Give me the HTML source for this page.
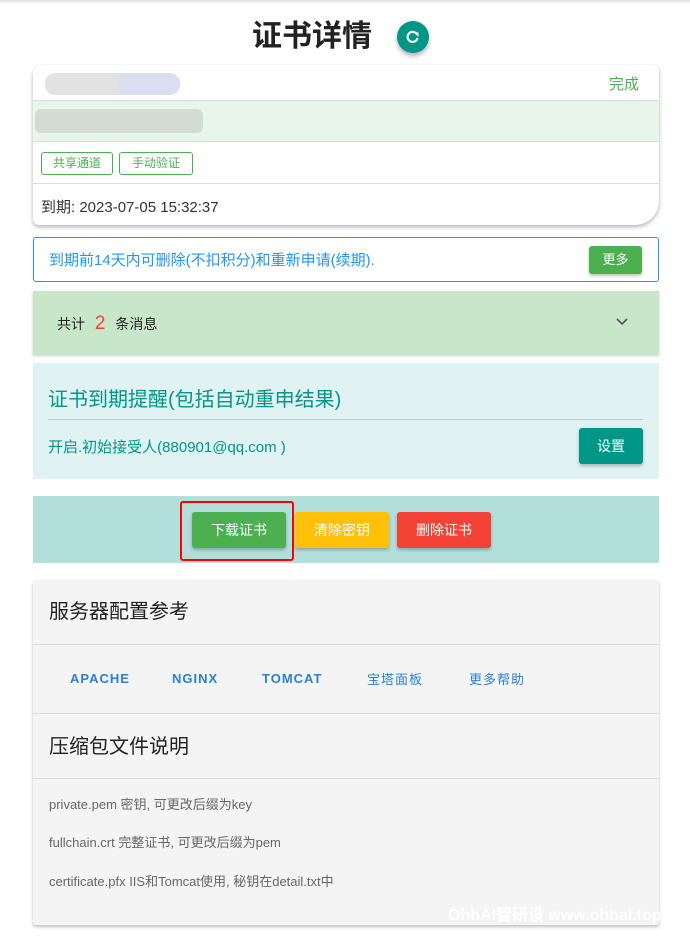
<!DOCTYPE html>
<html><head><meta charset="utf-8"><style>
*{box-sizing:border-box;margin:0;padding:0}
body{width:690px;height:944px;background:#fff;font-family:"Liberation Sans","Noto Sans CJK SC",sans-serif;position:relative;overflow:hidden;color:#333}
.a{position:absolute}
.topsh{left:0;top:0;width:690px;height:4px;background:linear-gradient(#ddd,#fff)}
.card1{left:33px;top:65px;width:626px;height:160px;background:#fff;border-radius:10px 6px 24px 6px;box-shadow:0 2px 4px rgba(0,0,0,.3);overflow:hidden}
.row{position:absolute;left:0;width:100%;border-bottom:1px solid #ddd}
.tag{position:absolute;top:10px;height:23px;border:1px solid #4caf50;border-radius:3px;color:#4caf50;font-size:12px;line-height:21px;text-align:center}
.btn{position:absolute;color:#fff;font-size:14px;text-align:center;border-radius:3px;box-shadow:0 2px 3px rgba(0,0,0,.25)}
.lnk{position:absolute;top:671px;color:#2a7fd4;font-size:13px;font-weight:bold;letter-spacing:1px}
.ln{position:absolute;left:33px;width:626px;height:1px;background:#ddd}
.ft{position:absolute;left:49px;font-size:13px;color:#666}
</style></head><body>
<div class="a topsh"></div>
<div class="a" style="left:252px;top:11px;font-size:30px;font-weight:bold;color:#222">证书详情</div>
<div class="a" style="left:397px;top:21px;width:32px;height:32px;border-radius:50%;background:#009688;box-shadow:0 3px 5px rgba(0,0,0,.3)">
<svg width="32" height="32" viewBox="0 0 32 32"><path d="M20 13.5A5 5 0 1 0 20.5 17" fill="none" stroke="#fff" stroke-width="2.2"/><path d="M17 11.5L21.5 11.5L21.5 16Z" fill="#fff"/></svg></div>
<div class="a card1">
 <div class="row" style="top:0;height:36px">
  <div class="a" style="left:12px;top:8px;width:135px;height:22px;border-radius:10px;background:linear-gradient(90deg,#e2e2e2 0 55%,#dcdff2 55%)"></div>
  <div class="a" style="right:20px;top:8px;color:#4caf50;font-size:15px">完成</div></div>
 <div class="row" style="top:36px;height:41px;background:#e8f5e9">
  <div class="a" style="left:2px;top:8px;width:168px;height:24px;background:#d2dcd3;border-radius:6px"></div></div>
 <div class="row" style="top:77px;height:42px">
  <div class="tag" style="left:8px;width:72px">共享通道</div>
  <div class="tag" style="left:86px;width:74px">手动验证</div></div>
 <div class="a" style="left:8px;top:131px;font-size:15px;color:#333">到期: 2023-07-05 15:32:37</div>
</div>
<div class="a" style="left:33px;top:237px;width:626px;height:45px;border:1px solid #2196f3;border-radius:3px">
 <div class="a" style="left:15px;top:11px;font-size:15px;color:#2196f3">到期前14天内可删除(不扣积分)和重新申请(续期).</div>
 <div class="btn" style="left:555px;top:8px;width:53px;height:28px;line-height:28px;background:#4caf50;font-size:13px">更多</div></div>
<div class="a" style="left:33px;top:291px;width:626px;height:64px;background:#c8e6c9;box-shadow:0 1px 3px rgba(0,0,0,.2)">
 <div class="a" style="left:24px;top:22px;font-size:14px;color:#222">共计 <span style="color:#f44336;font-size:19px;margin:0 6px">2</span> 条消息</div>
 <svg class="a" style="left:582px;top:26px" width="14" height="10"><path d="M2 2L7 7L12 2" fill="none" stroke="#555" stroke-width="1.6"/></svg></div>
<div class="a" style="left:33px;top:363px;width:626px;height:116px;background:#e0f2f1">
 <div class="a" style="left:15px;top:20px;font-size:20px;color:#009688">证书到期提醒(包括自动重申结果)</div>
 <div class="a" style="left:15px;top:56px;width:595px;height:1px;background:#b8d0cd"></div>
 <div class="a" style="left:15px;top:73px;font-size:15px;color:#009688">开启.初始接受人(880901@qq.com )</div>
 <div class="btn" style="left:546px;top:65px;width:64px;height:36px;line-height:36px;background:#009688">设置</div></div>
<div class="a" style="left:33px;top:496px;width:626px;height:67px;background:#b2dfdb"></div>
<div class="a" style="left:180px;top:501px;width:114px;height:60px;border:2px solid #f00;border-radius:3px"></div>
<div class="btn" style="left:192px;top:512px;width:94px;height:36px;line-height:36px;background:#4caf50">下载证书</div>
<div class="btn" style="left:295px;top:512px;width:94px;height:36px;line-height:36px;background:#ffc107">清除密钥</div>
<div class="btn" style="left:397px;top:512px;width:94px;height:36px;line-height:36px;background:#f44336">删除证书</div>
<div class="a" style="left:33px;top:580px;width:626px;height:345px;background:#f4f4f4;border-radius:3px;box-shadow:0 2px 3px rgba(0,0,0,.25)"></div>
<div class="a" style="left:49px;top:595px;font-size:20px;color:#222">服务器配置参考</div>
<div class="ln" style="top:644px"></div>
<div class="lnk" style="left:70px">APACHE</div>
<div class="lnk" style="left:172px">NGINX</div>
<div class="lnk" style="left:262px">TOMCAT</div>
<div class="lnk" style="left:367px;font-weight:normal;top:669px">宝塔面板</div>
<div class="lnk" style="left:469px;font-weight:normal;top:669px">更多帮助</div>
<div class="ln" style="top:713px"></div>
<div class="a" style="left:49px;top:730px;font-size:20px;color:#222">压缩包文件说明</div>
<div class="ln" style="top:778px"></div>
<div class="ft" style="top:794px">private.pem 密钥, 可更改后缀为key</div>
<div class="ft" style="top:832px">fullchain.crt 完整证书, 可更改后缀为pem</div>
<div class="ft" style="top:871px">certificate.pfx IIS和Tomcat使用, 秘钥在detail.txt中</div>
<div class="a" style="left:448px;top:901px;font-size:16px;font-weight:bold;color:#fff;white-space:nowrap">OhhAI智研设 www.ohhai.top</div>
</body></html>
